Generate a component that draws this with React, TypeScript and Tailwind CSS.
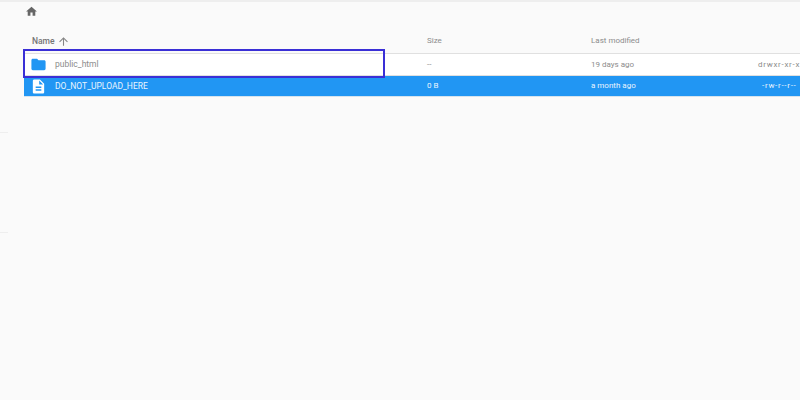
import React from "react";

function Home() {
  return (
    <svg width="13" height="13" viewBox="0 0 24 24" fill="#666666">
      <path d="M10 20v-6h4v6h5v-8h3L12 3 2 12h3v8z" />
    </svg>
  );
}
function Up() {
  return (
    <svg width="13" height="13" viewBox="0 0 24 24" fill="#858585">
      <path d="M4 12l1.41 1.41L11 7.83V20h2V7.83l5.58 5.59L20 12l-8-8-8 8z" />
    </svg>
  );
}
function Folder() {
  return (
    <svg width="17" height="17" viewBox="0 0 24 24" fill="#2196f3">
      <path d="M10 4H4c-1.1 0-2 .9-2 2v12c0 1.1.9 2 2 2h16c1.1 0 2-.9 2-2V8c0-1.1-.9-2-2-2h-8l-2-2z" />
    </svg>
  );
}
function FileIcon() {
  return (
    <svg width="17" height="17" viewBox="0 0 24 24" fill="#ffffff">
      <path d="M14 2H6c-1.1 0-2 .9-2 2v16c0 1.1.9 2 2 2h12c1.1 0 2-.9 2-2V8l-6-6zm2 16H8v-2h8v2zm0-4H8v-2h8v2zm-3-5V3.5L18.5 9H13z" />
    </svg>
  );
}

const cols = "grid grid-cols-[403px_164px_166px_43px] items-center";

export default function App() {
  return (
    <div className="relative w-[800px] h-[400px] overflow-hidden bg-[#fafafa] font-['Roboto',sans-serif]">
      <div className="h-[2px] bg-[#eeeeee]" />
      <div className="h-[19px] mb-[6px] pl-[25px] flex items-center">
        <Home />
      </div>
      <div className="ml-[24px] overflow-hidden">
        <div className={`${cols} h-[27px] pt-[2px] border-b border-[#e0e0e0] text-[8px] text-[#8c8c8c]`}>
          <div className="pl-[8px] flex items-center gap-[2px] text-[8.5px] font-medium text-[#757575]">
            Name <Up />
          </div>
          <div>Size</div>
          <div>Last modified</div>
          <div />
        </div>
        <div className={`${cols} h-[22px] bg-white border-b border-[#e0e0e0] text-[8px] text-[#8c8c8c]`}>
          <div className="pl-[6px] flex items-center gap-[8px] text-[8.5px]">
            <Folder />
            public_html
          </div>
          <div>--</div>
          <div>19 days ago</div>
          <div className="whitespace-nowrap pl-[1px] tracking-[0.7px]">drwxr-xr-x</div>
        </div>
        <div className={`${cols} h-[21px] bg-[#2196f3] border-b border-[#d5e3ee] text-[8px] text-[#eaf5fe]`}>
          <div className="pl-[6px] flex items-center gap-[8px] text-[8.5px]">
            <FileIcon />
            DO_NOT_UPLOAD_HERE
          </div>
          <div>0 B</div>
          <div>a month ago</div>
          <div className="whitespace-nowrap pl-[5px] tracking-[0.7px]">-rw-r--r--</div>
        </div>
      </div>
      <div className="absolute left-[23px] top-[49px] w-[362px] h-[29px] border-2 border-[#3a2fd6]" />
      <div className="absolute left-0 top-[132px] w-[8px] h-px bg-[#eeeeee]" />
      <div className="absolute left-0 top-[232px] w-[8px] h-px bg-[#eeeeee]" />
    </div>
  );
}
